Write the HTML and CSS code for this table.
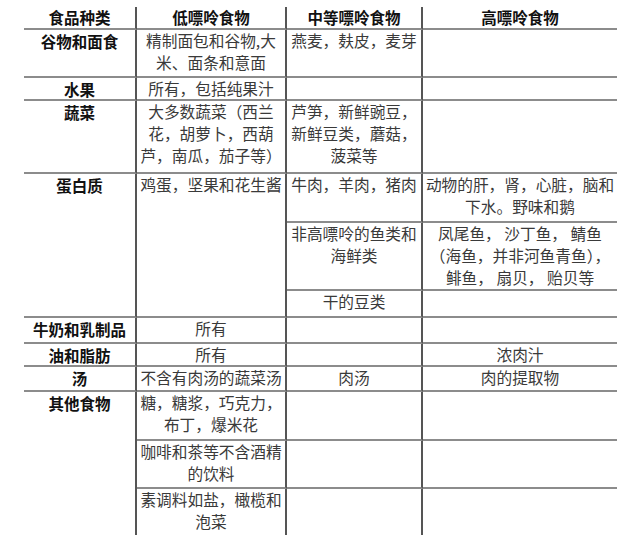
FILE: index.html
```html
<!DOCTYPE html>
<html lang="zh-CN">
<head>
<meta charset="utf-8">
<title>嘌呤食物表</title>
<link rel="stylesheet" href="styles.css">
</head>
<body>
<div class="sheet">
  <div class="cell head">食品种类</div>
  <div class="cell head">低嘌呤食物</div>
  <div class="cell head">中等嘌呤食物</div>
  <div class="cell head last">高嘌呤食物</div>

  <div class="cell cat">谷物和面食</div>
  <div class="cell">精制面包和谷物,大<br>米、面条和意面</div>
  <div class="cell">燕麦，麸皮，麦芽</div>
  <div class="cell last"></div>

  <div class="cell cat">水果</div>
  <div class="cell">所有，包括纯果汁</div>
  <div class="cell"></div>
  <div class="cell last"></div>

  <div class="cell cat">蔬菜</div>
  <div class="cell">大多数蔬菜（西兰<br>花，胡萝卜，西葫<br>芦，南瓜，茄子等）</div>
  <div class="cell">芦笋，新鲜豌豆，<br>新鲜豆类，蘑菇，<br>菠菜等</div>
  <div class="cell last"></div>

  <div class="cell cat span3">蛋白质</div>
  <div class="cell span3">鸡蛋，坚果和花生酱</div>
  <div class="cell">牛肉，羊肉，猪肉</div>
  <div class="cell last">动物的肝，肾，心脏，脑和<br>下水。野味和鹅</div>
  <div class="cell">非高嘌呤的鱼类和<br>海鲜类</div>
  <div class="cell last">凤尾鱼， 沙丁鱼， 鲭鱼<br>（海鱼，并非河鱼青鱼），<br>鲱鱼， 扇贝， 贻贝等</div>
  <div class="cell">干的豆类</div>
  <div class="cell last"></div>

  <div class="cell cat">牛奶和乳制品</div>
  <div class="cell">所有</div>
  <div class="cell"></div>
  <div class="cell last"></div>

  <div class="cell cat">油和脂肪</div>
  <div class="cell">所有</div>
  <div class="cell"></div>
  <div class="cell last">浓肉汁</div>

  <div class="cell cat">汤</div>
  <div class="cell">不含有肉汤的蔬菜汤</div>
  <div class="cell">肉汤</div>
  <div class="cell last">肉的提取物</div>

  <div class="cell cat span3 end">其他食物</div>
  <div class="cell">糖，糖浆，巧克力，<br>布丁，爆米花</div>
  <div class="cell"></div>
  <div class="cell last"></div>
  <div class="cell">咖啡和茶等不含酒精<br>的饮料</div>
  <div class="cell"></div>
  <div class="cell last"></div>
  <div class="cell end">素调料如盐，橄榄和<br>泡菜</div>
  <div class="cell end"></div>
  <div class="cell last end"></div>
</div>
</body>
</html>
```

FILE: styles.css
```css
html, body {
  margin: 0;
  padding: 0;
  background: #ffffff;
}

body {
  width: 640px;
  height: 538px;
  overflow: hidden;
  font-family: "Noto Sans CJK SC", "Noto Sans", sans-serif;
}

.sheet {
  display: grid;
  grid-template-columns: 113px 150px 136px 194px;
  grid-template-rows: 23px 48px 23px 73px 49px 68px 27px 26px 23px 25px 49px 48px 46px;
  margin: 7px 0 0 24px;
  width: 593px;
}

.cell {
  box-sizing: border-box;
  border-right: 2px solid #555555;
  border-bottom: 2px solid #8c8c8c;
  text-align: center;
  white-space: nowrap;
  font-size: 15.7px;
  line-height: 22px;
  color: #3a3a3a;
}

.head {
  font-size: 15.5px;
  line-height: 20px;
  font-weight: 700;
  color: #111111;
}

.cat {
  font-size: 15.5px;
  font-weight: 700;
  color: #111111;
}

.last {
  border-right: none;
}

.end {
  border-bottom: none;
}

.span3 {
  grid-row: span 3;
}
```
